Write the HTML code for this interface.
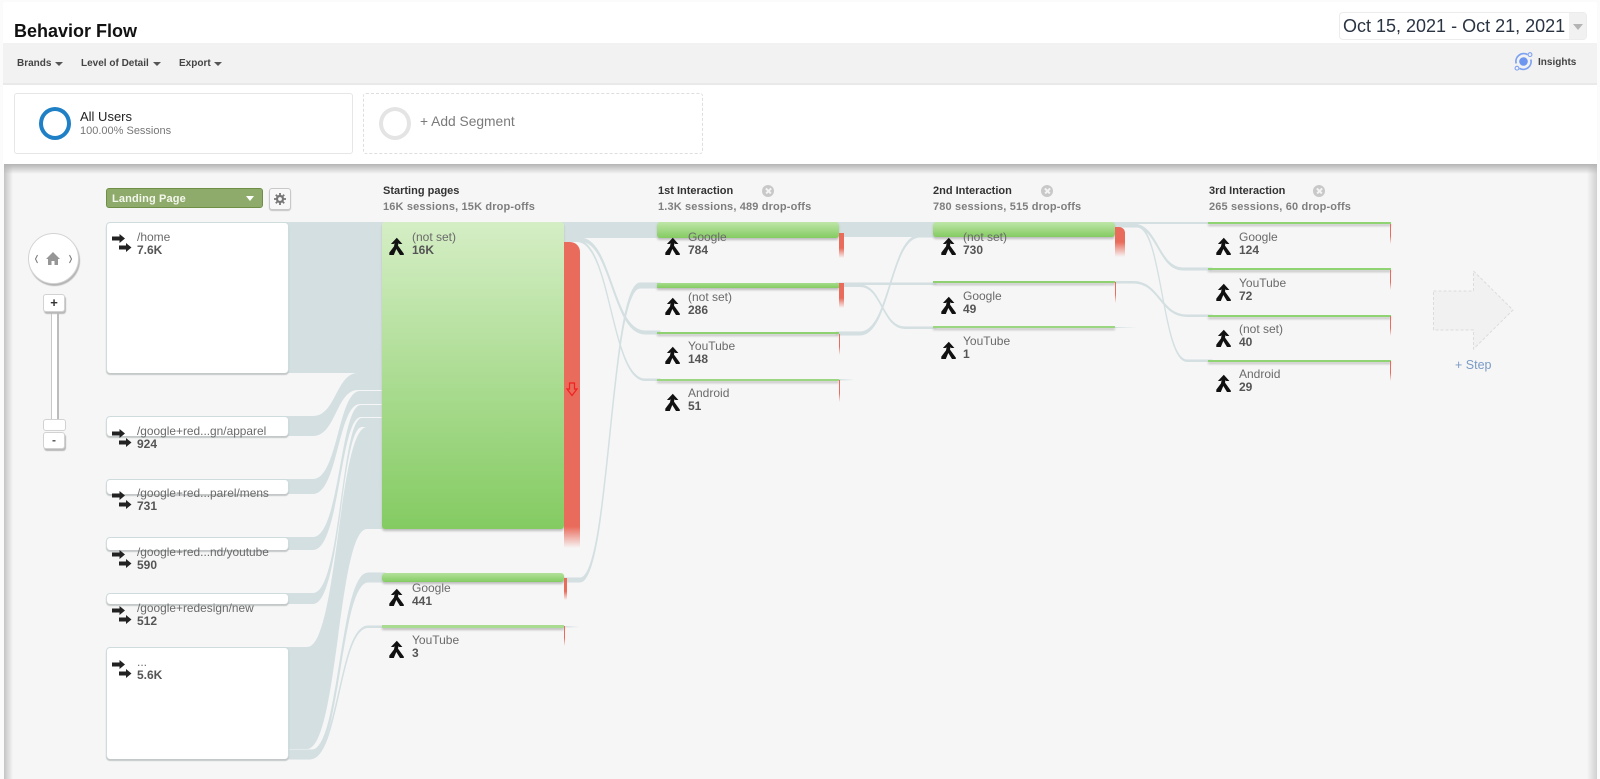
<!DOCTYPE html>
<html><head><meta charset="utf-8"><title>Behavior Flow</title>
<style>
html,body{margin:0;padding:0;width:1600px;height:779px;overflow:hidden;background:#fbfbfb;font-family:"Liberation Sans",sans-serif}
.a{position:absolute}
#wrap{position:absolute;left:0;top:0;width:1600px;height:779px;overflow:hidden}
.t{position:absolute;white-space:nowrap}
.lb{position:absolute;font-size:12px;line-height:13px;color:#6a6a6a;white-space:nowrap}
.lb b{display:block;color:#555;font-size:12px;line-height:13px}
.card{position:absolute;background:#fff;border-radius:4px;border:1px solid #cfdcde;border-bottom:0;box-shadow:0 2px 1px #c4c8c8;box-sizing:border-box;left:106px;width:183px}
.n{position:absolute;box-shadow:0 2px 2px #bdbdbd}
.r{position:absolute;background:linear-gradient(#e96b5b 60%,rgba(233,107,91,0))}
.h1{position:absolute;font-size:11px;font-weight:bold;color:#333;white-space:nowrap;line-height:13px}
.h2{position:absolute;font-size:11px;font-weight:bold;color:#7e7e7e;white-space:nowrap;line-height:13px;letter-spacing:.15px}
.x{position:absolute;width:12px;height:12px;border-radius:50%;background:#c8c8c8}
.x:before,.x:after{content:"";position:absolute;left:2.5px;top:5.2px;width:7px;height:1.6px;background:#f4f4f4;transform:rotate(45deg)}
.x:after{transform:rotate(-45deg)}
svg.ic{position:absolute;overflow:visible}
.btn{position:absolute;background:#fff;border:1px solid #d2d2d2;border-radius:3px;box-sizing:border-box;box-shadow:1px 2px 1px #b9b9b9;text-align:center;color:#444}
.s{stroke:#d3dfe1;stroke-width:1}
</style></head><body><div id="wrap">
<svg width="0" height="0" style="position:absolute"><defs>
<symbol id="m" viewBox="0 0 15 18"><path d="M7.8 .8 13.400 7 10.400 7 9.400 6.200 9 8.600 14.800 16.600 14.800 18 11 18 7.300 12 4.800 18 .3 18 .3 15.600 5 9.400 5.600 6.200 4.600 7 1.900 7Z" fill="#111"/></symbol>
<symbol id="d" viewBox="0 0 20 19"><path d="M0 2.500H7.500V0L13 4.500 7.500 9V6.500H0Z" fill="#222"/><path d="M7 11.500H14V9L19.500 13.500 14 18V15.500H7Z" fill="#222"/></symbol>
<linearGradient id="fd"><stop offset="0" stop-color="#d3dfe1"/><stop offset="1" stop-color="#d3dfe1" stop-opacity="0"/></linearGradient>
</defs></svg>

<!-- header -->
<div class="a" style="left:3px;top:2px;width:1594px;height:41px;background:#fff"></div>
<div class="t" style="left:14px;top:21px;font-size:18px;line-height:21px;font-weight:bold;color:#111">Behavior Flow</div>
<div class="a" style="left:1339px;top:12px;width:248px;height:28px;box-sizing:border-box;border:1px solid #ececec;border-radius:4px;background:#fff;overflow:hidden">
<div class="t" style="left:3px;top:3px;font-size:18px;line-height:21px;color:#2a3442">Oct 15, 2021 - Oct 21, 2021</div>
<div class="a" style="right:0;top:0;width:17px;height:26px;background:#f1f1f1"></div>
<div class="a" style="right:3px;top:11px;width:0;height:0;border-left:5px solid transparent;border-right:5px solid transparent;border-top:6px solid #b4b4b4"></div>
</div>

<!-- toolbar -->
<div class="a" style="left:3px;top:43px;width:1594px;height:40px;background:#f2f2f2;border-bottom:2px solid #e9e9e9"></div>
<div class="t" style="left:17px;top:58px;font-size:10px;line-height:12px;font-weight:bold;color:#444">Brands</div>
<div class="a" style="left:55px;top:62px;border-left:4px solid transparent;border-right:4px solid transparent;border-top:4px solid #555"></div>
<div class="t" style="left:81px;top:58px;font-size:10px;line-height:12px;font-weight:bold;color:#444">Level of Detail</div>
<div class="a" style="left:153px;top:62px;border-left:4px solid transparent;border-right:4px solid transparent;border-top:4px solid #555"></div>
<div class="t" style="left:179px;top:58px;font-size:10px;line-height:12px;font-weight:bold;color:#444">Export</div>
<div class="a" style="left:214px;top:62px;border-left:4px solid transparent;border-right:4px solid transparent;border-top:4px solid #555"></div>
<svg class="ic" style="left:1513px;top:51px" width="21" height="21" viewBox="0 0 21 21">
<circle cx="10.5" cy="10.5" r="4.3" fill="#6d96f0"/>
<path d="M3.2 12.500A7.800 7.800 0 0 1 14.500 3.600M17.800 8.500A7.800 7.800 0 0 1 6.500 17.400" fill="none" stroke="#7da2f2" stroke-width="1.700"/>
<circle cx="17" cy="3.600" r="1.900" fill="#f2f2f2" stroke="#7da2f2" stroke-width="1.100"/>
<circle cx="4" cy="17.200" r="1.900" fill="#f2f2f2" stroke="#7da2f2" stroke-width="1.100"/>
</svg>
<div class="t" style="left:1538px;top:57px;font-size:10px;line-height:12px;font-weight:bold;color:#444">Insights</div>

<!-- segments -->
<div class="a" style="left:3px;top:85px;width:1594px;height:79px;background:#fff"></div>
<div class="a" style="left:14px;top:93px;width:339px;height:61px;box-sizing:border-box;border:1px solid #e6e6e6;border-radius:3px;background:#fff"></div>
<div class="a" style="left:39px;top:107px;width:32px;height:33px;box-sizing:border-box;border:4px solid #1f80c6;border-radius:50%"></div>
<div class="t" style="left:80px;top:109px;font-size:13px;line-height:15px;color:#222">All Users</div>
<div class="t" style="left:80px;top:125px;font-size:11px;line-height:13px;color:#777">100.00% Sessions</div>
<div class="a" style="left:363px;top:93px;width:340px;height:61px;box-sizing:border-box;border:1px dashed #dedede;border-radius:3px;background:#fff"></div>
<div class="a" style="left:379px;top:107px;width:32px;height:33px;box-sizing:border-box;border:4px solid #e4e4e4;border-radius:50%"></div>
<div class="t" style="left:420px;top:114px;font-size:13.800px;line-height:16px;color:#7a7a7a">+ Add Segment</div>

<!-- canvas -->
<div class="a" style="left:4px;top:164px;width:1593px;height:615px;background:#f6f6f6"></div>
<div class="a" style="left:4px;top:164px;width:9px;height:615px;background:linear-gradient(90deg,#c4c4c4,#f6f6f6)"></div>
<div class="a" style="left:1587px;top:164px;width:10px;height:615px;background:linear-gradient(270deg,#d0d0d0,#f6f6f6)"></div>
<div class="a" style="left:4px;top:164px;width:1593px;height:10px;background:linear-gradient(#b4b4b4,rgba(246,246,246,0))"></div>

<!-- flows -->
<svg class="a" style="left:0;top:0" width="1600" height="779" fill="#d3dfe1">
<rect x="285" y="222" width="100" height="151"/>
<path d="M285 416H313C336 416 336 373 358 373H385V390H358C336 390 336 436 313 436H285Z"/>
<path d="M285 479H313C338 479 338 391 360 391H385V404H360C338 404 338 494 313 494H285Z"/>
<path d="M285 537H313C340 537 340 405 361 405H385V417H361C340 417 340 550 313 550H285Z"/>
<path d="M285 593H313C341 593 341 418 362 418H385V427H362C341 427 341 604 313 604H285Z"/>
<path d="M285 647H307C338 647 338 427 367 427H385V529H367C338 529 338 749 307 749H285Z"/>
<path class="s" d="M285 750H312C340 750 340 573 368 573H385V582H368C340 582 340 755 312 755H285Z"/>
<path class="s" d="M285 756H310C339 756 339 626 368 626H385V627.500H368C339 627.500 339 759 310 759H285Z"/>
<rect x="560" y="222" width="100" height="16"/>
<path class="s" d="M560 238H580C612 238 612 331 645 331H660V334H645C612 334 612 241 580 241H560Z"/>
<path class="s" d="M560 240H577C611 240 611 379 645 379H660V380.500H645C611 380.500 611 241.500 577 241.500H560Z"/>
<path class="s" d="M560 578H580C610 578 610 283 640 283H660V288H640C610 288 610 582 580 582H560Z"/>
<rect x="836" y="222" width="100" height="15"/>
<path class="s" d="M836 332H860C890 332 890 235 920 235H936V237H920C890 237 890 335 860 335H836Z"/>
<path class="s" d="M836 283H936V284.500H836Z"/>
<path class="s" d="M836 285H860C882 285 882 327 905 327H936V328.500H905C882 328.500 882 286.500 860 286.500H836Z"/>
<rect x="1112" y="222" width="100" height="2"/>
<path class="s" d="M1112 224H1133C1158 224 1158 268 1183 268H1212V270H1183C1158 270 1158 226 1133 226H1112Z"/>
<path class="s" d="M1112 225.500H1137C1162 225.500 1162 360 1187 360H1212V361.500H1187C1162 361.500 1162 227 1137 227H1112Z"/>
<path class="s" d="M1112 281.500H1133C1160 281.500 1160 315 1187 315H1212V316.500H1187C1160 316.500 1160 283 1133 283H1112Z"/>
<rect x="839" y="379" width="16" height="1.500" fill="url(#fd)"/>
<rect x="1115" y="327" width="22" height="1" fill="url(#fd)"/>
<rect x="564" y="626" width="16" height="1.500" fill="url(#fd)"/>
</svg>

<!-- zoom controls -->
<div class="a" style="left:28px;top:233px;width:51px;height:51px;box-sizing:border-box;border:1px solid #d4d4d4;border-radius:50%;background:#fff;box-shadow:1px 2px 1px #b5b5b5"></div>
<svg class="ic" style="left:34px;top:250px" width="40" height="18" viewBox="0 0 40 18">
<path d="M3.500 5 1.500 9 3.500 13M35.500 5 37.500 9 35.500 13" fill="none" stroke="#777" stroke-width="1"/>
<path d="M19 2 12 9 14 9 14 15 17.500 15 17.500 11 20.500 11 20.500 15 24 15 24 9 26 9Z" fill="#969696"/>
</svg>
<div class="a" style="left:51px;top:311px;width:8px;height:110px;box-sizing:border-box;background:#fff;border-left:1px solid #c8c8c8;border-right:2px solid #bcbcbc"></div>
<div class="btn" style="left:43px;top:294px;width:22px;height:18px;font-size:13px;line-height:16px;font-weight:bold;color:#333">+</div>
<div class="btn" style="left:43px;top:419px;width:23px;height:12px;box-shadow:none"></div>
<div class="btn" style="left:43px;top:432px;width:22px;height:17px;font-size:12px;line-height:14px;font-weight:bold;color:#555">-</div>

<!-- landing head -->
<div class="a" style="left:106px;top:188px;width:157px;height:20px;box-sizing:border-box;background:#8fab6b;border:1px solid #6f8f47;border-radius:3px"></div>
<div class="t" style="left:112px;top:192px;font-size:11px;line-height:14px;font-weight:bold;color:#f4f7ee;letter-spacing:.15px">Landing Page</div>
<div class="a" style="left:246px;top:196px;border-left:4.500px solid transparent;border-right:4.500px solid transparent;border-top:5px solid #fff"></div>
<div class="a" style="left:269px;top:188px;width:22px;height:22px;box-sizing:border-box;background:#f8f8f8;border:1px solid #c8c8c8;border-radius:3px;box-shadow:0 1px 1px #c4c4c4"></div>
<svg class="ic" style="left:274px;top:193px" width="12" height="12" viewBox="0 0 12 12">
<circle cx="6" cy="6" r="3" fill="none" stroke="#777" stroke-width="2.200"/>
<path d="M6 0V2.500M6 9.500V12M0 6H2.500M9.500 6H12M1.800 1.800 3.500 3.500M8.500 8.500 10.200 10.200M1.800 10.200 3.500 8.500M8.500 3.500 10.200 1.800" stroke="#777" stroke-width="1.800"/>
</svg>

<!-- column headers -->
<div class="h1" style="left:383px;top:185px">Starting pages</div>
<div class="h2" style="left:383px;top:201px">16K sessions, 15K drop-offs</div>
<div class="h1" style="left:658px;top:185px">1st Interaction</div>
<div class="x" style="left:762px;top:185px"></div>
<div class="h2" style="left:658px;top:201px">1.3K sessions, 489 drop-offs</div>
<div class="h1" style="left:933px;top:185px">2nd Interaction</div>
<div class="x" style="left:1041px;top:185px"></div>
<div class="h2" style="left:933px;top:201px">780 sessions, 515 drop-offs</div>
<div class="h1" style="left:1209px;top:185px">3rd Interaction</div>
<div class="x" style="left:1313px;top:185px"></div>
<div class="h2" style="left:1209px;top:201px">265 sessions, 60 drop-offs</div>

<!-- landing cards -->
<div class="card" style="top:222px;height:151px"></div>
<div class="card" style="top:416px;height:20px"></div>
<div class="card" style="top:479px;height:15px"></div>
<div class="card" style="top:537px;height:13px"></div>
<div class="card" style="top:593px;height:11px"></div>
<div class="card" style="top:647px;height:112px"></div>

<svg class="ic" style="left:112px;top:234px" width="20" height="19"><use href="#d"/></svg>
<div class="lb" style="left:137px;top:231px">/home<b>7.6K</b></div>
<svg class="ic" style="left:112px;top:429px" width="20" height="19"><use href="#d"/></svg>
<div class="lb" style="left:137px;top:425px;font-size:11.900px">/google+red...gn/apparel<b>924</b></div>
<svg class="ic" style="left:112px;top:491px" width="20" height="19"><use href="#d"/></svg>
<div class="lb" style="left:137px;top:487px;font-size:11.900px">/google+red...parel/mens<b>731</b></div>
<svg class="ic" style="left:112px;top:550px" width="20" height="19"><use href="#d"/></svg>
<div class="lb" style="left:137px;top:546px;font-size:11.900px">/google+red...nd/youtube<b>590</b></div>
<svg class="ic" style="left:112px;top:606px" width="20" height="19"><use href="#d"/></svg>
<div class="lb" style="left:137px;top:602px;font-size:11.900px">/google+redesign/new<b>512</b></div>
<svg class="ic" style="left:112px;top:660px" width="20" height="19"><use href="#d"/></svg>
<div class="lb" style="left:137px;top:656px">...<b>5.6K</b></div>

<!-- starting pages nodes -->
<div class="n" style="left:382px;top:222px;width:182px;height:307px;border-radius:3px;background:linear-gradient(#d5eec5,#84cb62)"></div>
<div class="a" style="left:564px;top:242px;width:15.500px;height:306px;border-radius:0 10px 0 0;background:linear-gradient(#e96b5b 93%,rgba(233,107,91,0))"></div>
<svg class="ic" style="left:566px;top:382px" width="12" height="15" viewBox="0 0 12 15"><path d="M3.500 1H8.500V7H11L6 13.500 1 7H3.500Z" fill="none" stroke="#f02020" stroke-width="1.200"/></svg>
<div class="n" style="left:382px;top:573px;width:182px;height:9px;border-radius:3px;background:linear-gradient(#b4e29c,#84cb62)"></div>
<div class="r" style="left:564px;top:578px;width:3px;height:22px"></div>
<div class="n" style="left:382px;top:625px;width:182px;height:3px;background:#a9dc90"></div>
<div class="r" style="left:564px;top:626px;width:1px;height:20px"></div>

<!-- col1 -->
<div class="n" style="left:657px;top:222px;width:182px;height:16px;border-radius:3px;background:linear-gradient(#bfe6a8,#84cb62)"></div>
<div class="r" style="left:839px;top:233px;width:5px;height:25px"></div>
<div class="n" style="left:657px;top:283px;width:182px;height:5px;background:linear-gradient(#a5dc8c,#84cb62)"></div>
<div class="r" style="left:839px;top:283px;width:5px;height:25px"></div>
<div class="n" style="left:657px;top:332px;width:182px;height:2px;background:#8fd070"></div>
<div class="r" style="left:839px;top:334px;width:1px;height:21px"></div>
<div class="n" style="left:657px;top:379px;width:182px;height:2px;background:#9ad780"></div>
<div class="r" style="left:839px;top:380px;width:1px;height:22px"></div>

<!-- col2 -->
<div class="n" style="left:933px;top:222px;width:182px;height:15px;border-radius:3px;background:linear-gradient(#bfe6a8,#84cb62)"></div>
<div class="a" style="left:1115px;top:227px;width:10px;height:30px;border-radius:0 6px 0 0;background:linear-gradient(#e96b5b 50%,rgba(233,107,91,0))"></div>
<div class="n" style="left:933px;top:281px;width:182px;height:2px;background:#8fd070"></div>
<div class="r" style="left:1115px;top:282px;width:1px;height:21px"></div>
<div class="n" style="left:933px;top:326px;width:182px;height:2px;background:#9ad780"></div>

<!-- col3 -->
<div class="n" style="left:1208px;top:222px;width:183px;height:2px;background:#90d372"></div>
<div class="r" style="left:1390px;top:224px;width:1px;height:20px"></div>
<div class="n" style="left:1208px;top:268px;width:183px;height:2px;background:#90d372"></div>
<div class="r" style="left:1390px;top:270px;width:1px;height:20px"></div>
<div class="n" style="left:1208px;top:315px;width:183px;height:2px;background:#90d372"></div>
<div class="r" style="left:1390px;top:316px;width:1px;height:20px"></div>
<div class="n" style="left:1208px;top:360px;width:183px;height:2px;background:#90d372"></div>
<div class="r" style="left:1390px;top:361px;width:1px;height:20px"></div>

<!-- node labels -->
<svg class="ic" style="left:389px;top:237px" width="15" height="18"><use href="#m"/></svg>
<div class="lb" style="left:412px;top:231px">(not set)<b>16K</b></div>
<svg class="ic" style="left:389px;top:588px" width="15" height="18"><use href="#m"/></svg>
<div class="lb" style="left:412px;top:582px">Google<b>441</b></div>
<svg class="ic" style="left:389px;top:640px" width="15" height="18"><use href="#m"/></svg>
<div class="lb" style="left:412px;top:634px">YouTube<b>3</b></div>

<svg class="ic" style="left:665px;top:237px" width="15" height="18"><use href="#m"/></svg>
<div class="lb" style="left:688px;top:231px">Google<b>784</b></div>
<svg class="ic" style="left:665px;top:297px" width="15" height="18"><use href="#m"/></svg>
<div class="lb" style="left:688px;top:291px">(not set)<b>286</b></div>
<svg class="ic" style="left:665px;top:346px" width="15" height="18"><use href="#m"/></svg>
<div class="lb" style="left:688px;top:340px">YouTube<b>148</b></div>
<svg class="ic" style="left:665px;top:393px" width="15" height="18"><use href="#m"/></svg>
<div class="lb" style="left:688px;top:387px">Android<b>51</b></div>

<svg class="ic" style="left:941px;top:237px" width="15" height="18"><use href="#m"/></svg>
<div class="lb" style="left:963px;top:231px">(not set)<b>730</b></div>
<svg class="ic" style="left:941px;top:296px" width="15" height="18"><use href="#m"/></svg>
<div class="lb" style="left:963px;top:290px">Google<b>49</b></div>
<svg class="ic" style="left:941px;top:341px" width="15" height="18"><use href="#m"/></svg>
<div class="lb" style="left:963px;top:335px">YouTube<b>1</b></div>

<svg class="ic" style="left:1216px;top:237px" width="15" height="18"><use href="#m"/></svg>
<div class="lb" style="left:1239px;top:231px">Google<b>124</b></div>
<svg class="ic" style="left:1216px;top:283px" width="15" height="18"><use href="#m"/></svg>
<div class="lb" style="left:1239px;top:277px">YouTube<b>72</b></div>
<svg class="ic" style="left:1216px;top:329px" width="15" height="18"><use href="#m"/></svg>
<div class="lb" style="left:1239px;top:323px">(not set)<b>40</b></div>
<svg class="ic" style="left:1216px;top:374px" width="15" height="18"><use href="#m"/></svg>
<div class="lb" style="left:1239px;top:368px">Android<b>29</b></div>

<!-- step -->
<svg class="ic" style="left:0;top:0" width="1600" height="779">
<path d="M1433.500 291H1473.500V271L1513 310 1473.500 349V330H1433.500Z" fill="#f1f1f1" stroke="#dcdcdc" stroke-dasharray="3 2"/>
</svg>
<div class="t" style="left:1455px;top:358px;font-size:12.500px;line-height:14px;color:#7a9cc6">+ Step</div>
</div></body></html>
